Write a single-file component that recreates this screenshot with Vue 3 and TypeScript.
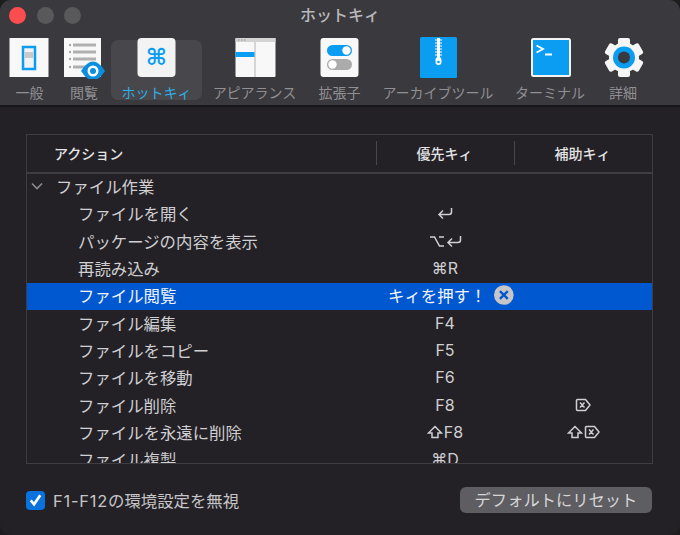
<template>
  <div class="window">
    <div class="toolbar">
      <div class="titlebar">
        <span class="light red"></span>
        <span class="light"></span>
        <span class="light"></span>
        <span class="title">ホットキィ</span>
      </div>
      <div class="tabs">
        <div v-for="tab in tabs" :key="tab.id" class="tab" :class="{ active: tab.id === 'hotkey' }">
          <svg class="tab-icon" viewBox="0 0 48 42" width="48" height="42">
            <template v-if="tab.id === 'general'">
              <rect x="3.5" y="1" width="39" height="39" fill="#f8f8f8" />
              <rect x="17" y="10" width="12" height="22" fill="#f2f2f2" stroke="#0a9df2" stroke-width="2.5" />
              <rect x="18.5" y="15" width="9" height="6" fill="#c9c9c9" />
            </template>
            <template v-else-if="tab.id === 'browse'">
              <rect x="4" y="1" width="37" height="39" fill="#f8f8f8" />
              <g v-for="y in [8, 15, 22, 30]" :key="y">
                <circle cx="10" :cy="y" r="1.2" fill="#a8a8a8" />
                <rect x="13" :y="y - 1.5" width="23" height="3" fill="#b0b0b0" />
              </g>
              <path d="M21 34 Q33 15 45 34 Q33 53 21 34z" fill="#0a8fe0" />
              <circle cx="33" cy="34" r="5.5" fill="#fff" />
              <circle cx="33" cy="34" r="3" fill="#0a8fe0" />
            </template>
            <template v-else-if="tab.id === 'hotkey'">
              <rect x="4.5" y="1" width="38" height="39" rx="4" fill="#f3f3f3" />
              <text x="23.5" y="28" class="cmd-glyph">⌘</text>
            </template>
            <template v-else-if="tab.id === 'appearance'">
              <rect x="4.5" y="1" width="40" height="39" rx="1" fill="#f8f8f8" />
              <rect x="4.5" y="1" width="40" height="4" fill="#d4d4d4" />
              <path d="M7 3h1.5M10 3h1.5M13 3h1.5" stroke="#8f8f8f" stroke-width="1" />
              <rect x="23.5" y="5" width="1" height="35" fill="#b4b4b4" />
              <rect x="4.5" y="15" width="19" height="5" fill="#0a9df2" />
            </template>
            <template v-else-if="tab.id === 'ext'">
              <rect x="4.5" y="1" width="38" height="39" rx="3" fill="#f8f8f8" />
              <rect x="11" y="8" width="25" height="11" rx="5.5" fill="#0a9df2" />
              <circle cx="30.5" cy="13.5" r="4.2" fill="#fff" />
              <rect x="11" y="22" width="25" height="11" rx="5.5" fill="#acabab" />
              <circle cx="16.5" cy="27.5" r="4.2" fill="#fff" />
            </template>
            <template v-else-if="tab.id === 'archive'">
              <rect x="6" y="0" width="37" height="41" rx="1.5" fill="#0a9df2" />
              <rect x="23" y="1" width="3" height="20" fill="#fff" />
              <path d="M21 3h7M21 6h7M21 9h7M21 12h7M21 15h7M21 18h7" stroke="#fff" stroke-width="1" />
              <rect x="21.5" y="20" width="6" height="8" rx="3" fill="#fff" />
              <circle cx="24.5" cy="25" r="1.3" fill="#0a9df2" />
            </template>
            <template v-else-if="tab.id === 'terminal'">
              <rect x="6" y="2" width="38" height="37" rx="1.5" fill="#0a9df2" stroke="#f4f4f4" stroke-width="2" />
              <path d="M10.5 8.5l6.5 3.5-6.5 3.5M19 17.5h7" fill="none" stroke="#fff" stroke-width="1.8" />
            </template>
            <template v-else>
              <g fill="#f6f6f6">
                <rect
                  v-for="a in [0, 60, 120, 180, 240, 300]"
                  :key="a"
                  x="19"
                  y="1"
                  width="12"
                  height="10"
                  rx="2"
                  :transform="`rotate(${a} 25 20.5)`"
                />
                <circle cx="25" cy="20.5" r="15" />
              </g>
              <circle cx="25" cy="20.5" r="11" fill="#0a9df2" />
              <circle cx="25" cy="20.5" r="6" fill="#3a393d" />
            </template>
          </svg>
          <span class="tab-label">{{ tab.label }}</span>
        </div>
      </div>
    </div>

    <div class="content">
      <div class="table">
        <div class="head">
          <div class="head-cell first">アクション</div>
          <div class="head-cell">優先キィ</div>
          <div class="head-cell">補助キィ</div>
        </div>
        <div class="row group">
          <div class="action">
            <svg class="chevron" viewBox="0 0 12 8" width="12" height="8">
              <path d="M1 1.5l5 5 5-5" fill="none" stroke="#8b8a8d" stroke-width="1.6" />
            </svg>
            ファイル作業
          </div>
        </div>
        <div v-for="row in rows" :key="row.name" class="row" :class="{ selected: row.recording }">
          <div class="action indent">{{ row.name }}</div>
          <div v-if="row.recording" class="key recording">
            <span>キィを押す！</span>
            <svg viewBox="0 0 20 20" width="20" height="20">
              <circle cx="10" cy="10" r="10" fill="#c6c6c8" />
              <path d="M6 6l8 8M14 6l-8 8" stroke="#0058d0" stroke-width="2.4" />
            </svg>
          </div>
          <div v-else class="key">
            <template v-for="(k, i) in row.main" :key="i">
              <svg v-if="glyphs[k]" class="glyph" viewBox="0 0 16 14" width="16" height="14">
                <path :d="glyphs[k]" />
              </svg>
              <span v-else>{{ k }}</span>
            </template>
          </div>
          <div class="key">
            <template v-for="(k, i) in row.alt" :key="i">
              <svg class="glyph" viewBox="0 0 16 14" width="16" height="14">
                <path :d="glyphs[k]" />
              </svg>
            </template>
          </div>
        </div>
      </div>

      <div class="footer">
        <label class="check">
          <span class="box">
            <svg viewBox="0 0 20 20" width="20" height="20">
              <path d="M5 10.5l3.5 4L15 5" fill="none" stroke="#fff" stroke-width="2.8" />
            </svg>
          </span>
          <span><span class="fkeys">F1-F12</span>の環境設定を無視</span>
        </label>
        <button class="reset">デフォルトにリセット</button>
      </div>
    </div>
  </div>
</template>

<script setup lang="ts">
interface Row {
  name: string;
  main: string[];
  alt: string[];
  recording?: boolean;
}

const tabs = [
  { id: 'general', label: '一般' },
  { id: 'browse', label: '閲覧' },
  { id: 'hotkey', label: 'ホットキィ' },
  { id: 'appearance', label: 'アピアランス' },
  { id: 'ext', label: '拡張子' },
  { id: 'archive', label: 'アーカイブツール' },
  { id: 'terminal', label: 'ターミナル' },
  { id: 'detail', label: '詳細' },
];

// modifier key symbols
const glyphs: Record<string, string> = {
  ret: 'M14.5 2v4a2.5 2.5 0 0 1-2.5 2.5H2M6 4.5l-4 4 4 4',
  opt: 'M1 3h4.5l5 9H15M10 3h5',
  shift: 'M8 1.5L1.5 8H5v4.5h6V8h3.5z',
  del: 'M2.5 1.5h8L15 7l-4.5 5.5h-8a1 1 0 0 1-1-1v-9a1 1 0 0 1 1-1zM5 4.5l4.5 5M9.5 4.5l-4.5 5',
};

const rows: Row[] = [
  { name: 'ファイルを開く', main: ['ret'], alt: [] },
  { name: 'パッケージの内容を表示', main: ['opt', 'ret'], alt: [] },
  { name: '再読み込み', main: ['⌘R'], alt: [] },
  { name: 'ファイル閲覧', main: [], alt: [], recording: true },
  { name: 'ファイル編集', main: ['F4'], alt: [] },
  { name: 'ファイルをコピー', main: ['F5'], alt: [] },
  { name: 'ファイルを移動', main: ['F6'], alt: [] },
  { name: 'ファイル削除', main: ['F8'], alt: ['del'] },
  { name: 'ファイルを永遠に削除', main: ['shift', 'F8'], alt: ['shift', 'del'] },
  { name: 'ファイル複製', main: ['⌘D'], alt: [] },
];
</script>

<style>
html,
body {
  margin: 0;
  background: #1d1c1f;
}
</style>

<style scoped>
.window {
  width: 680px;
  height: 535px;
  box-sizing: border-box;
  overflow: hidden;
  border-radius: 11px;
  background: #232126;
  font-family: Inter, "Noto Sans CJK JP", "DejaVu Sans", sans-serif;
  display: flex;
  flex-direction: column;
}

.toolbar {
  height: 105px;
  background: #3a393d;
  border-bottom: 2px solid #18171a;
}

.titlebar {
  height: 40px;
  position: relative;
  display: flex;
  align-items: flex-start;
  gap: 10.5px;
  padding: 7px 0 0 9px;
  box-sizing: border-box;
}

.light {
  width: 17px;
  height: 17px;
  border-radius: 50%;
  background: #59585b;
}

.light.red {
  background: #fb4d4f;
}

.title {
  position: absolute;
  left: 0;
  right: 0;
  top: 4px;
  text-align: center;
  font-size: 16px;
  line-height: 22px;
  font-weight: 500;
  color: #b9b8ba;
}

.tabs {
  display: grid;
  grid-template-columns: 55px 54px 91px 105px 65px 132px 92px 54px;
  padding-left: 2px;
}

.tab {
  height: 60px;
  border-radius: 7px;
  display: flex;
  flex-direction: column;
  align-items: center;
}

.tab.active {
  background: #48474b;
}

.tab-icon {
  margin-top: -3px;
  flex: none;
}

.cmd-glyph {
  font-family: "DejaVu Sans", sans-serif;
  font-size: 23px;
  font-weight: 700;
  text-anchor: middle;
  fill: #0a9df2;
}

.tab-label {
  margin-top: 4px;
  font-size: 14px;
  line-height: 20px;
  white-space: nowrap;
  color: #908f92;
}

.tab.active .tab-label {
  color: #2fb0ea;
}

.content {
  padding: 27px 27px 0 26px;
}

.table {
  height: 330px;
  overflow: hidden;
  box-sizing: border-box;
  border: 1px solid #3e3d42;
}

.head {
  display: grid;
  grid-template-columns: 349px 138px 1fr;
  align-items: center;
  height: 38.5px;
  box-sizing: border-box;
  border-bottom: 2px solid #3e3d42;
}

.head-cell {
  height: 24px;
  line-height: 26px;
  padding-right: 2px;
  box-sizing: border-box;
  text-align: center;
  font-size: 14px;
  font-weight: 500;
  color: #e4e4e5;
  border-left: 1px solid #47464a;
}

.head-cell.first {
  text-align: left;
  padding-left: 27px;
  border-left: none;
}

.row {
  display: grid;
  grid-template-columns: 349px 138px 1fr;
  align-items: center;
  height: 27.3px;
  padding-bottom: 2px;
  box-sizing: border-box;
  font-size: 16.4px;
  color: #d0cfd1;
}

.row.selected {
  background: #0058d0;
  color: #f0f3f8;
}

.action {
  white-space: nowrap;
  display: flex;
  align-items: center;
  padding-left: 30px;
}

.group .action {
  padding-left: 4px;
}

.chevron {
  margin-right: 13px;
}

.action.indent {
  padding-left: 51px;
}

.key {
  display: flex;
  align-items: center;
  justify-content: center;
  white-space: nowrap;
  gap: 1px;
  font-size: 16px;
}

.key.recording {
  justify-content: flex-start;
  padding-left: 12px;
  gap: 8px;
  font-size: 16.4px;
}

.glyph {
  fill: none;
  stroke: #d0cfd1;
  stroke-width: 1.5;
}

.footer {
  margin-top: 23px;
  display: flex;
  align-items: center;
  justify-content: space-between;
}

.check {
  display: flex;
  align-items: center;
  gap: 8px;
  font-size: 16.4px;
  color: #c6c5c7;
}

.fkeys {
  letter-spacing: 0.8px;
}

.box {
  width: 19px;
  height: 19px;
  border-radius: 4px;
  background: #0a72dc;
  display: flex;
  align-items: center;
  justify-content: center;
}

.reset {
  width: 192px;
  height: 26px;
  margin-right: 1px;
  padding: 0 0 2px;
  border: none;
  border-radius: 6px;
  background: #5e5d62;
  font-family: inherit;
  font-size: 16.3px;
  color: #d6d6d7;
}
</style>
